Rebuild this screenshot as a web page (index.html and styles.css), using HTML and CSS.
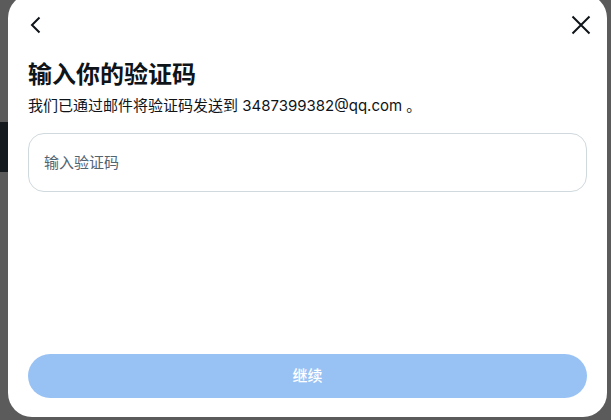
FILE: index.html
```html
<!DOCTYPE html>
<html lang="zh-CN">
<head>
<meta charset="utf-8">
<title>输入你的验证码</title>
<link rel="stylesheet" href="styles.css">
</head>
<body>
<div class="page">
  <div class="page-bar"></div>
</div>
<div class="modal" role="dialog">
  <div class="modal-head">
    <button class="icon-btn" aria-label="返回">
      <svg width="24" height="24" viewBox="0 0 24 24"><path d="M15.5 4.5 L8 12 L15.5 19.5" fill="none" stroke="#0f1419" stroke-width="2"/></svg>
    </button>
    <button class="icon-btn" aria-label="关闭">
      <svg width="24" height="24" viewBox="0 0 24 24"><path d="M3.5 3.5 L20.5 20.5 M20.5 3.5 L3.5 20.5" fill="none" stroke="#0f1419" stroke-width="2"/></svg>
    </button>
  </div>
  <div class="modal-body">
    <h1 class="title">输入你的验证码</h1>
    <p class="subtitle">我们已通过邮件将验证码发送到 3487399382@qq.com 。</p>
    <input class="code-input" type="text" placeholder="输入验证码">
  </div>
  <div class="modal-foot">
    <button class="next-btn" disabled>继续</button>
  </div>
</div>
</body>
</html>
```
FILE: styles.css
```css
html, body {
  margin: 0;
  padding: 0;
  height: 100%;
  overflow: hidden;
}
body {
  background: #5b5b5b;
  font-family: Inter, "Noto Sans CJK SC", sans-serif;
  color: #0f1419;
}
.page {
  padding-top: 122px;
}
.page-bar {
  width: 300px;
  height: 50px;
  background: #151a1f;
}
.modal {
  position: absolute;
  left: 8px;
  top: -6px;
  width: 599px;
  height: 423px;
  background: #ffffff;
  border-radius: 24px;
  display: flex;
  flex-direction: column;
  box-sizing: border-box;
}
.modal-head {
  display: flex;
  justify-content: space-between;
  padding: 19px 14px 0 16px;
}
.icon-btn {
  width: 24px;
  height: 24px;
  padding: 0;
  border: 0;
  background: none;
  display: flex;
}
.modal-body {
  flex: 1;
  padding: 0 20px;
  display: flex;
  flex-direction: column;
}
.title {
  margin: 24px 0 0;
  font-size: 24px;
  line-height: 28px;
  font-weight: 700;
  color: #0f1419;
}
.subtitle {
  margin: 7px 0 0;
  font-size: 15px;
  line-height: 20px;
  color: #0f1419;
}
.code-input {
  margin-top: 17px;
  height: 59px;
  box-sizing: border-box;
  border: 1px solid #cfd9de;
  border-radius: 16px;
  padding: 0 15px;
  font-family: Inter, "Noto Sans CJK SC", sans-serif;
  font-size: 15px;
  color: #0f1419;
  outline: none;
}
.code-input::placeholder {
  color: #536471;
}
.modal-foot {
  padding: 0 20px 19px;
}
.next-btn {
  width: 100%;
  height: 44px;
  border: 0;
  border-radius: 22px;
  background: #99c2f4;
  color: #ffffff;
  font-family: Inter, "Noto Sans CJK SC", sans-serif;
  font-size: 15px;
  font-weight: 500;
  padding: 0 0 3px;
}
```
